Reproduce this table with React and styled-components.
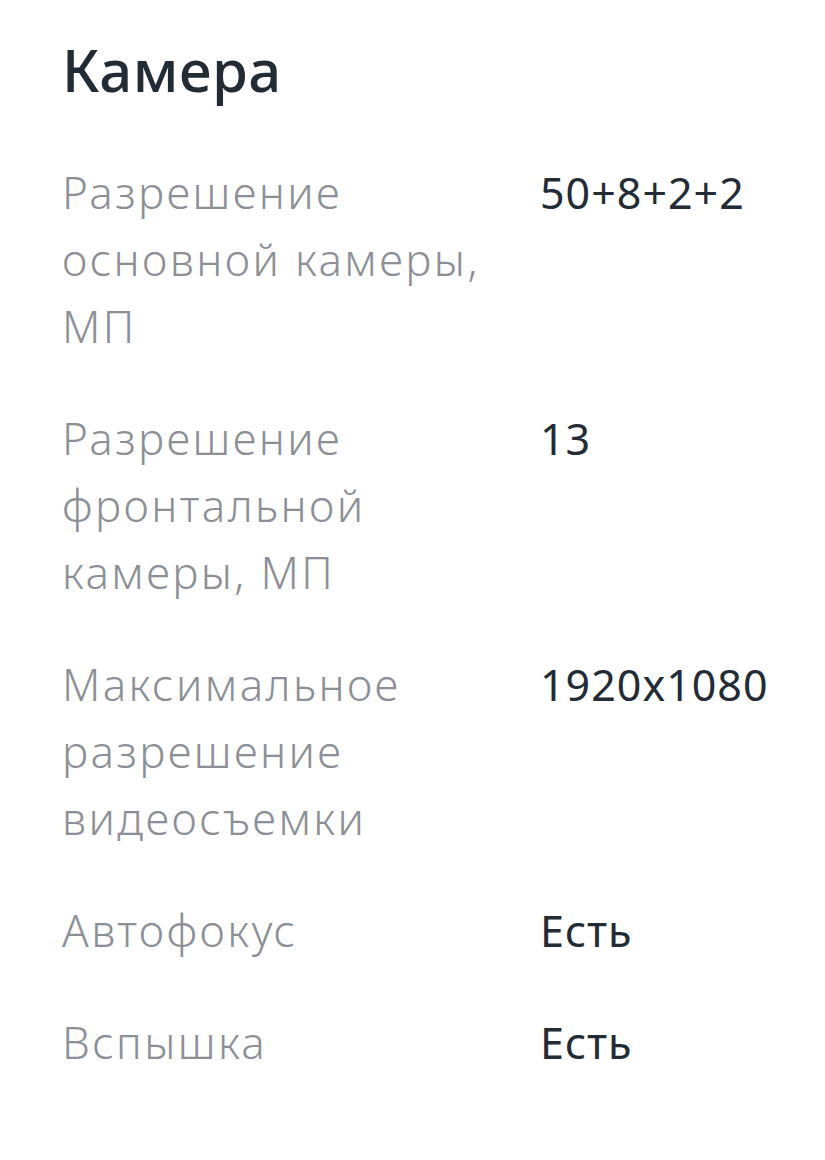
import React from 'react';
import styled, { createGlobalStyle } from 'styled-components';

const GlobalStyle = createGlobalStyle`
  body {
    margin: 0;
    background: #ffffff;
    font-family: "Noto Sans", "Open Sans", sans-serif;
  }
`;

const Section = styled.section`
  padding: 34px 40px 40px 62px;
`;

const Title = styled.h2`
  margin: 0 0 53px 0;
  font-size: 58px;
  line-height: 72px;
  font-weight: 500;
  color: #232b35;
  letter-spacing: 0.5px;
`;

const SpecList = styled.dl`
  margin: 0;
  display: grid;
  grid-template-columns: 430px 1fr;
  column-gap: 48px;
  row-gap: 45px;
`;

const Label = styled.dt`
  margin: 0;
  font-size: 44px;
  line-height: 67px;
  font-weight: 300;
  letter-spacing: 2.4px;
  color: #8c9096;
`;

const Value = styled.dd`
  margin: 0;
  font-size: 43px;
  line-height: 67px;
  letter-spacing: 1px;
  color: #232b35;
`;

const specs = [
  { label: 'Разрешение основной камеры, МП', value: '50+8+2+2' },
  { label: 'Разрешение фронтальной камеры, МП', value: '13' },
  { label: 'Максимальное разрешение видеосъемки', value: '1920x1080' },
  { label: 'Автофокус', value: 'Есть' },
  { label: 'Вспышка', value: 'Есть' },
];

const App = () => (
  <>
    <GlobalStyle />
    <Section>
      <Title>Камера</Title>
      <SpecList>
        {specs.map((s) => (
          <React.Fragment key={s.label}>
            <Label>{s.label}</Label>
            <Value>{s.value}</Value>
          </React.Fragment>
        ))}
      </SpecList>
    </Section>
  </>
);

export default App;
